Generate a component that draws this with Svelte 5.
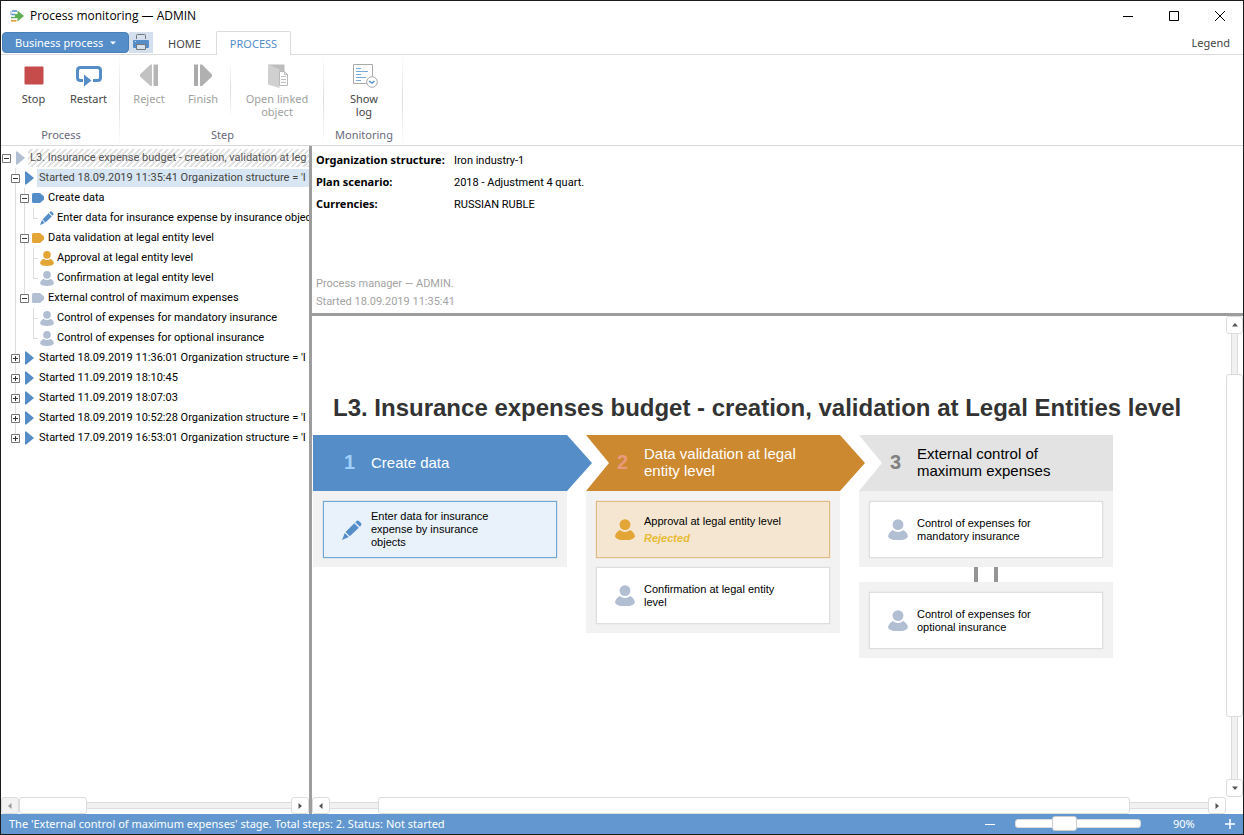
<script>
  const tree = [
    { level: 0, icon: 'play', color: '#b2bfd3', state: 'minus', text: 'L3. Insurance expense budget - creation, validation at leg', kind: 'hatched', guides: [] },
    { level: 1, icon: 'play', color: '#548dc8', state: 'minus', text: "Started 18.09.2019 11:35:41 Organization structure = 'I", kind: 'selected', guides: [0] },
    { level: 2, icon: 'stage', color: '#548dc8', state: 'minus', text: 'Create data', guides: [0, 1] },
    { level: 3, icon: 'pencil', color: '#548dc8', text: 'Enter data for insurance expense by insurance objec', guides: [0, 1], last: true },
    { level: 2, icon: 'stage', color: '#e3a536', state: 'minus', text: 'Data validation at legal entity level', guides: [0, 1] },
    { level: 3, icon: 'person', color: '#e3a536', text: 'Approval at legal entity level', guides: [0, 1, 2] },
    { level: 3, icon: 'person', color: '#b2bfd3', text: 'Confirmation at legal entity level', guides: [0, 1], last: true },
    { level: 2, icon: 'stage', color: '#b2bfd3', state: 'minus', text: 'External control of maximum expenses', guides: [0], last: true },
    { level: 3, icon: 'person', color: '#b2bfd3', text: 'Control of expenses for mandatory insurance', guides: [0, 2] },
    { level: 3, icon: 'person', color: '#b2bfd3', text: 'Control of expenses for optional insurance', guides: [0], last: true },
    { level: 1, icon: 'play', color: '#548dc8', state: 'plus', text: "Started 18.09.2019 11:36:01 Organization structure = 'I", guides: [0] },
    { level: 1, icon: 'play', color: '#548dc8', state: 'plus', text: 'Started 11.09.2019 18:10:45', guides: [0] },
    { level: 1, icon: 'play', color: '#548dc8', state: 'plus', text: 'Started 11.09.2019 18:07:03', guides: [0] },
    { level: 1, icon: 'play', color: '#548dc8', state: 'plus', text: "Started 18.09.2019 10:52:28 Organization structure = 'I", guides: [0] },
    { level: 1, icon: 'play', color: '#548dc8', state: 'plus', text: "Started 17.09.2019 16:53:01 Organization structure = 'I", guides: [], last: true }
  ];

  const stages = [
    { num: 1, title: ['Create data'], tone: 'blue', groups: [[{ icon: 'pencil', tone: 'active', color: '#548dc8', lines: ['Enter data for insurance', 'expense by insurance', 'objects'] }]] },
    { num: 2, title: ['Data validation at legal', 'entity level'], tone: 'orange', groups: [[
      { icon: 'person', tone: 'rejected', color: '#e3a536', lines: ['Approval at legal entity level'], status: 'Rejected' },
      { icon: 'person', tone: 'idle', color: '#b2bfd3', lines: ['Confirmation at legal entity', 'level'] }
    ]] },
    { num: 3, title: ['External control of', 'maximum expenses'], tone: 'gray', groups: [
      [{ icon: 'person', tone: 'idle', color: '#b2bfd3', lines: ['Control of expenses for', 'mandatory insurance'] }],
      [{ icon: 'person', tone: 'idle', color: '#b2bfd3', lines: ['Control of expenses for', 'optional insurance'] }]
    ] }
  ];

  let zoom = $state(90);
</script>

{#snippet glyph(name, color)}
  {#if name === 'play'}
    <svg viewBox="0 0 14 14" fill={color}><path d="M3 0.500h1.200L12 7 4.200 13.500H3z" /></svg>
  {:else if name === 'stage'}
    <svg viewBox="0 0 14 14" fill={color}><path d="M2.500 2H9l4 3.600v2.800L9 12H2.500Q1 12 1 10.500v-7Q1 2 2.500 2z" /></svg>
  {:else if name === 'person'}
    <svg viewBox="0 0 14 15" fill={color}><circle cx="7" cy="3.900" r="3.800" /><path d="M3.300 7.700Q7 10.500 10.700 7.700 13.800 9.500 14 12.500 12.500 15 7 15T0 12.500Q.2 9.500 3.300 7.700z" /></svg>
  {:else}
    <svg viewBox="0 0 20 20" fill={color}><path d="M13.300 2.200 14.500 1q1.200-1 2.400 0L19 3.100q1 1.200 0 2.400l-1.200 1.200zM12.300 3.200l4.500 4.500-9 8.600L3.600 12zM2.800 13l4 4L0 20z" /></svg>
  {/if}
{/snippet}

{#snippet arrow(dir)}
  <svg class="arrow" viewBox="0 0 8 8" fill="currentColor">
    {#if dir === 'left'}<path d="M5.500 1v6L2 4z" />
    {:else if dir === 'right'}<path d="M2.500 1v6L6 4z" />
    {:else if dir === 'up'}<path d="M1 5.500h6L4 2z" />
    {:else}<path d="M1 2.500h6L4 6z" />{/if}
  </svg>
{/snippet}

<div class="window">
  <header class="titlebar">
    <svg class="logo" viewBox="0 0 14 12"><path d="M2 1h5M1.500 4.500H5" stroke="#548dc8" stroke-width="1.400" /><path d="M1 1v4" stroke="#7ba7d5" /><path d="M1 7.500h6" stroke="#68a968" stroke-width="1.400" /><path d="M1 10.800h5.500" stroke="#e8a33d" stroke-width="1.800" /><path d="M7.500.5 14 6l-6.500 5.500V8H5V4h2.500z" fill="#5fae55" /></svg>
    <h1>Process monitoring — ADMIN</h1>
    <div class="winbtns">
      <button aria-label="Minimize"><svg viewBox="0 0 12 12"><path d="M1 6.500h10" /></svg></button>
      <button aria-label="Maximize"><svg viewBox="0 0 12 12"><path d="M1.500 1.500h9v9h-9z" /></svg></button>
      <button aria-label="Close"><svg viewBox="0 0 12 12"><path d="m1 1 10 10M11 1 1 11" /></svg></button>
    </div>
  </header>

  <nav class="tabs">
    <button class="menu">Business process <svg viewBox="0 0 6 4"><path d="M0 .5h6L3 3.500z" fill="#fff" /></svg></button>
    <button class="print" aria-label="Print"><svg viewBox="0 0 18 18"><path d="M4.500 5V1.500q0-1 1-1h7q1 0 1 1V5" fill="none" stroke="#757575" /><path d="M2 6h14q1 0 1 1v6q0 1-1 1H2q-1 0-1-1V7q0-1 1-1z" fill="#548dc8" /><path d="M4.500 10.500h9v5h-9z" fill="#d4e0ed" stroke="#757575" /><path d="M3 7.500h1" stroke="#d4e0ed" /></svg></button>
    <button class="tab">HOME</button>
    <button class="tab current">PROCESS</button>
    <a class="legend" href="#legend">Legend</a>
  </nav>

  <section class="ribbon">
    <div class="group g1">
      <div class="tools">
        <button><svg viewBox="0 0 28 26"><rect x="4.500" y="4.500" width="19" height="18" rx="1" fill="#c64c4c" /></svg>Stop</button>
        <button><svg viewBox="0 0 28 26"><path d="M8 18.500H5.500Q2.500 18.500 2.500 15.500v-7Q2.500 5.500 5.500 5.500h17q3 0 3 3v7q0 3-3 3H18" fill="none" stroke="#548dc8" stroke-width="3" /><path d="m9 12.500 7.500 6-7.500 6z" fill="#548dc8" /></svg>Restart</button>
      </div>
      <p>Process</p>
    </div>
    <div class="group g2">
      <div class="tools">
        <button disabled><svg viewBox="0 0 28 26"><path d="M17 2.500V24h-1.500L5 14.500v-2L15.500 2.500z" fill="#c2c2c2" /><path d="M18.500 2.500H23V24h-4.500z" fill="#b5b5b5" /></svg>Reject</button>
        <button disabled><svg viewBox="0 0 28 26"><path d="M5 2.500h4V24H5z" fill="#aaa" /><path d="M11 2.500h2L23 12.500v2L13 24h-2z" fill="#b0b0b0" /></svg>Finish</button>
        <i class="bar"></i>
        <button class="wide" disabled><svg viewBox="0 0 28 26"><path d="M5 2.500h16.500V21H9z" fill="#bcbcbc" /><path d="m5 2.500 11.500 4.500V26L5 22.500z" fill="#d0d0d0" /><path d="M16.500 9.500h5l3 3v11h-8z" fill="#fff" stroke="#b8b8b8" /><path d="M21.500 9.500v3h3M18 14.500h5M18 17.500h5M18 20.500h5" stroke="#bdbdbd" fill="none" /></svg>Open linked object</button>
      </div>
      <p>Step</p>
    </div>
    <div class="group g3">
      <div class="tools">
        <button class="log"><svg viewBox="0 0 28 26"><path d="M3.500 2.500h19v19h-19z" fill="#fff" stroke="#aaa" /><path d="M6 6.500h5M6 9.500h12M6 12.500h5M6 15.500h10M6 18.500h5" stroke="#7aa8d8" /><circle cx="22" cy="20" r="5.300" fill="#fff" stroke="#aaa" /><path d="m19 19 3 2 2.500-2" fill="none" stroke="#548dc8" stroke-width="1.500" /></svg>Show log</button>
      </div>
      <p>Monitoring</p>
    </div>
  </section>

  <main>
    <aside>
      <ul class="tree">
        {#each tree as row}
          <li class={['row', 'l' + row.level]}>
            {#each row.guides as g}<i class={['guide', 'x' + g]}></i>{/each}
            {#if row.last}<i class={['guide', 'half', 'x' + (row.level - 1)]}></i>{/if}
            {#if row.level === 3}<i class="stub"></i>{/if}
            {#if row.state}
              <button class="expander" aria-label={row.state === 'plus' ? 'Expand' : 'Collapse'}>
                <svg viewBox="0 0 9 9"><path d="M.5.5h8v8h-8z" fill="#fff" stroke="#757575" /><path d={row.state === 'plus' ? 'M2 4.500h5M4.500 2v5' : 'M2 4.500h5'} stroke="#333" /></svg>
              </button>
            {:else}<span class="expander"></span>{/if}
            <span class="ticon">{@render glyph(row.icon, row.color)}</span>
            <span class={['label', row.kind]}>{row.text}</span>
          </li>
        {/each}
      </ul>
      <div class="scroll side">
        <button class="off" aria-label="Scroll left">{@render arrow('left')}</button>
        <div class="track"><div class="thumb"></div></div>
        <button aria-label="Scroll right">{@render arrow('right')}</button>
      </div>
    </aside>

    <section class="content">
      <div class="info">
        <dl>
          <dt>Organization structure:</dt><dd>Iron industry-1</dd>
          <dt>Plan scenario:</dt><dd>2018 - Adjustment 4 quart.</dd>
          <dt>Currencies:</dt><dd>RUSSIAN RUBLE</dd>
        </dl>
        <footer>Process manager — ADMIN.<br />Started 18.09.2019 11:35:41</footer>
      </div>

      <div class="viewer">
        <div class="canvas">
          <h2>L3. Insurance expenses budget - creation, validation at Legal Entities level</h2>
          <div class="stages">
            {#each stages as s}
              <section class={['stage', s.tone]}>
                <header><b>{s.num}</b><span>{#each s.title as t, i}{#if i}<br />{/if}{t}{/each}</span></header>
                {#each s.groups as group, gi}
                  {#if gi}<div class="link"></div>{/if}
                  <div class="cards">
                    {#each group as c}
                      <article class={c.tone}>
                        <span class="cicon">{@render glyph(c.icon, c.color)}</span>
                        <div>{#each c.lines as t, i}{#if i}<br />{/if}{t}{/each}{#if c.status}<em>{c.status}</em>{/if}</div>
                      </article>
                    {/each}
                  </div>
                {/each}
              </section>
            {/each}
          </div>
        </div>
        <div class="scroll vert">
          <button aria-label="Scroll up">{@render arrow('up')}</button>
          <div class="track"><div class="thumb"></div></div>
          <button aria-label="Scroll down">{@render arrow('down')}</button>
        </div>
        <div class="scroll horiz">
          <button aria-label="Scroll left">{@render arrow('left')}</button>
          <div class="track"><div class="thumb"></div></div>
          <button aria-label="Scroll right">{@render arrow('right')}</button>
        </div>
      </div>
    </section>
  </main>

  <footer class="status">
    <span class="msg">The 'External control of maximum expenses' stage. Total steps: 2. Status: Not started</span>
    <button aria-label="Zoom out"><svg viewBox="0 0 10 10"><path d="M0 5.500h10" /></svg></button>
    <input type="range" min="10" max="230" bind:value={zoom} aria-label="Zoom" />
    <output>{zoom}%</output>
    <button aria-label="Zoom in"><svg viewBox="0 0 10 10"><path d="M0 5h10M5 0v10" stroke-width="1.500" /></svg></button>
  </footer>
</div>

<style>
  * { box-sizing: border-box; }
  button { border: 0; background: none; padding: 0; margin: 0; font: inherit; color: inherit; }
  svg { display: block; }
  h1, h2, p, dl, dd, ul { margin: 0; padding: 0; }
  .window { height: 100vh; display: flex; flex-direction: column; border: 1px solid #1c1c1c; background: #fff; font: 11px/13px "Noto Sans", sans-serif; color: #444; }

  .titlebar { display: flex; align-items: center; height: 30px; padding-left: 9px; flex: none; }
  .logo { width: 14px; height: 12px; margin-right: 6px; }
  h1 { font: 12px/16px "Open Sans", sans-serif; color: #000; flex: 1; }
  .winbtns { display: flex; }
  .winbtns button { width: 46px; height: 28px; display: grid; place-items: center; }
  .winbtns svg { width: 12px; height: 12px; fill: none; stroke: #000; }

  .tabs { display: flex; height: 24px; flex: none; border-bottom: 1px solid #dcdcdc; padding-left: 1px; align-items: flex-start; }
  .menu { display: flex; align-items: center; justify-content: space-between; width: 127px; height: 21px; margin-top: 1px; padding: 0 12px; background: #548dc8; border: 1px solid #4a80b8; border-radius: 4px; color: #fff; }
  .menu svg { width: 6px; height: 4px; }
  .print { width: 24px; height: 21px; margin-top: 1px; background: #d4e0ed; display: grid; place-items: center; }
  .print svg { width: 18px; height: 18px; }
  .tab { height: 24px; padding: 0 15px; }
  .tab.current { padding: 0 13px; background: #fff; color: #548dc8; border: 1px solid #dcdcdc; border-bottom: 0; border-radius: 2px 2px 0 0; }
  .legend { margin-left: auto; padding: 5px 13px 0 0; color: #444; text-decoration: none; }

  .ribbon { display: flex; height: 91px; flex: none; border-bottom: 1px solid #d8d8d8; }
  .group { display: flex; flex-direction: column; justify-content: space-between; padding: 7px 0 4px 2px; border-right: 1px solid; border-image: linear-gradient(#fff, #ddd 50%, #fff) 1; }
  .group p { text-align: center; color: #69697c; }
  .tools { display: flex; justify-content: center; }
  .tools button { display: flex; flex-direction: column; align-items: center; width: 55px; }
  .tools button:disabled { color: #a0a0a0; }
  .tools svg { width: 28px; height: 26px; margin-bottom: 4px; }
  .tools .wide { width: 92px; padding: 0 8px; }
  .tools .log { width: 50px; padding: 0 8px; }
  .bar { width: 1px; background: linear-gradient(#fff, #ddd, #fff); }
  .g1 { width: 119px; } .g2 { width: 204px; } .g3 { width: 79px; }
  .g2 .tools button:not(.wide) { width: 54px; }

  main { flex: 1; min-height: 0; display: flex; }
  aside { width: 311px; flex: none; display: flex; flex-direction: column; border-right: 3px solid #9d9d9d; min-width: 0; }
  .tree { flex: 1; list-style: none; padding-top: 2px; overflow: hidden; font: 11px/18px Roboto, sans-serif; color: #000; }
  .row { position: relative; display: flex; align-items: center; height: 20px; padding-left: 1px; white-space: nowrap; }
  .l1 { padding-left: 10px; } .l2 { padding-left: 19px; } .l3 { padding-left: 28px; }
  .expander { width: 9px; height: 9px; flex: none; position: relative; }
  .ticon { width: 14px; flex: none; margin: 0 1px 0 2px; position: relative; }
  .label { padding-left: 2px; flex: 1; min-width: 0; overflow: hidden; }
  .selected { background: #d8e6f3; color: #444; }
  .hatched { background: repeating-linear-gradient(135deg, #fff 0 2px, #e2e2e2 2px 4px); color: #555; }
  .guide { position: absolute; top: 0; bottom: 0; width: 1px; background: #ddd; }
  .half { bottom: 10px; }
  .x0 { left: 14px; } .x1 { left: 23px; } .x2 { left: 32px; }
  .stub { position: absolute; left: 32px; top: 10px; width: 5px; height: 1px; background: #ddd; }

  .scroll { display: flex; height: 17px; flex: none; color: #555; }
  .scroll button { width: 18px; flex: none; background: #fff; border: 1px solid #dcdcdc; border-radius: 3px; display: grid; place-items: center; }
  .scroll .off { background: #f2f2f2; color: #999; }
  .arrow { width: 8px; height: 8px; }
  .track { flex: 1; display: flex; background: linear-gradient(#fff 5px, #dcdcdc 5px 6px, #f1f1f1 6px 11px, #dcdcdc 11px 12px, #fff 12px); }
  .thumb { background: #fff; border: 1px solid #dcdcdc; border-radius: 3px; }
  .side .thumb { width: 25%; }
  .horiz .thumb { width: 85.6%; margin-left: 5.5%; }
  .vert { flex-direction: column; width: 17px; height: auto; grid-row: 1; grid-column: 2; }
  .vert button { width: 17px; height: 18px; }
  .vert .track { flex-direction: column; background: linear-gradient(90deg, #fff 5px, #dcdcdc 5px 6px, #f1f1f1 6px 11px, #dcdcdc 11px 12px, #fff 12px); }
  .vert .thumb { height: 77%; margin-top: 40px; }

  .content { flex: 1; min-width: 0; display: flex; flex-direction: column; }
  .info { height: 170px; flex: none; display: flex; flex-direction: column; justify-content: space-between; padding: 3px 4px 2px; border-bottom: 3px solid #9d9d9d; color: #000; font-family: Roboto, sans-serif; }
  dl { display: grid; grid-template-columns: 138px 1fr; line-height: 21px; align-items: baseline; }
  dt { font-family: "Noto Sans", sans-serif; font-weight: bold; }
  .info footer { color: #a3a3a3; line-height: 18px; }
  .viewer { flex: 1; min-height: 0; display: grid; grid-template: 1fr 17px / minmax(0, 1fr) 17px; }
  .canvas { overflow: hidden; padding: 78px 0 0 1px; font-family: "Liberation Sans", Arial, sans-serif; color: #000; }
  h2 { font: bold 24px/28px "Liberation Sans", Arial, sans-serif; color: #333; padding-left: 20px; white-space: nowrap; }
  .stages { display: flex; align-items: flex-start; gap: 19px; margin-top: 13px; }
  .stage { width: 254px; flex: none; }
  .stage header { height: 56px; margin-right: -25px; padding-bottom: 2px; display: flex; align-items: center; font-size: 15px; line-height: 17px; background: #548dc8; color: #fff; clip-path: polygon(0 0, calc(100% - 25px) 0, 100% 50%, calc(100% - 25px) 100%, 0 100%); }
  .stage header b { width: 27px; margin-left: 31px; font-size: 20px; color: #9fd0fb; }
  .orange header { background: #cd8930; clip-path: polygon(0 0, calc(100% - 25px) 0, 100% 50%, calc(100% - 25px) 100%, 0 100%, 23px 50%); }
  .stage.orange header b { color: #e9997c; }
  .gray header { background: #e3e3e3; color: #000; margin-right: 0; clip-path: polygon(0 0, 100% 0, 100% 100%, 0 100%, 23px 50%); }
  .stage.gray header b { color: #808080; }
  .cards { background: #f2f2f2; padding: 10px 10px 9px; display: grid; gap: 9px; }
  article { height: 57px; display: flex; align-items: center; border: 1px solid #dedede; background: #fff; padding-left: 18px; line-height: 13px; box-shadow: 0 0 1px #ccc; }
  .active { background: #e9f2fa; border-color: #72a7d9; box-shadow: 0 0 1px #72a7d9; }
  .rejected { background: #f4e6d1; border-color: #e0b983; box-shadow: 0 0 1px #e0b983; }
  .cicon { width: 20px; margin-right: 9px; }
  em { display: block; margin-top: 4px; font-weight: bold; color: #e9bb33; }
  .link { height: 15px; width: 24px; margin-left: 115px; border: solid #959595; border-width: 0 4px; }
  .horiz { grid-row: 2; grid-column: 1; }

  .status { height: 20px; flex: none; display: flex; align-items: center; padding: 0 8px 1px; background: #6298cf; color: #fff; }
  .msg { flex: 1; }
  .status svg { width: 10px; height: 10px; stroke: #fff; }
  input { appearance: none; width: 126px; height: 9px; margin: 0 32px 0 20px; background: #fff; border-radius: 3px; border: 1px solid #dcdcdc; }
  input::-webkit-slider-thumb { appearance: none; width: 25px; height: 15px; background: #fff; border: 1px solid #ccc; border-radius: 3px; }
  output { width: 52px; }
</style>
